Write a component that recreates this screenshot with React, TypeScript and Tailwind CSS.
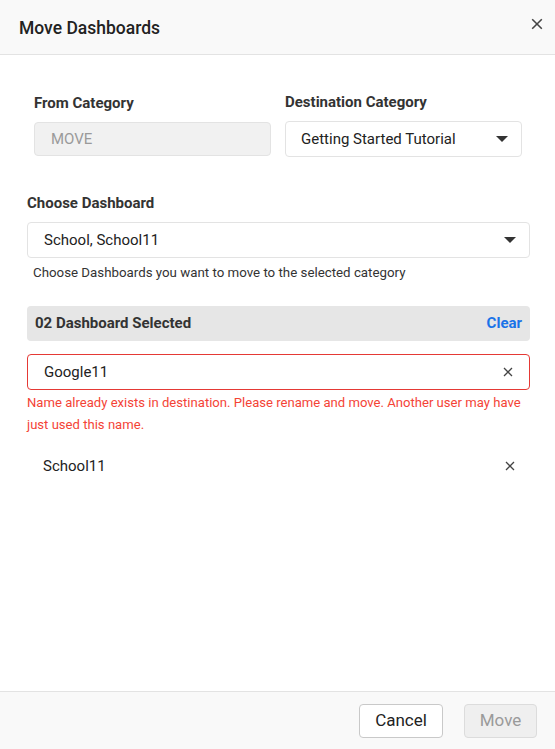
import React from "react";

function Caret() {
  return (
    <svg width="12" height="6" viewBox="0 0 12 6" className="shrink-0">
      <path d="M0 0h12L6 6z" fill="#333" />
    </svg>
  );
}

function Cross({ size = 10 }: { size?: number }) {
  return (
    <svg width={size} height={size} viewBox="0 0 10 10" className="shrink-0">
      <path d="M1 1l8 8M9 1l-8 8" stroke="#444" strokeWidth="1.3" />
    </svg>
  );
}

export default function App() {
  return (
    <div
      className="w-[555px] h-[749px] bg-white flex flex-col text-[#333]"
      style={{ fontFamily: "Roboto, 'Liberation Sans', sans-serif" }}
    >
      <header className="h-[55px] shrink-0 bg-[#f9f9f9] border-b border-[#e3e3e3] flex items-center justify-between pl-[19px] pr-[6px]">
        <h1 className="text-[17.5px] font-medium text-[#222] pt-[2px]">Move Dashboards</h1>
        <button className="w-6 h-6 flex items-center justify-center -mt-[7px]">
          <Cross size={12} />
        </button>
      </header>

      <main className="flex-1 pl-[27px] pr-[25px]">
        <section className="grid grid-cols-2 gap-[14px] pt-[38px] pl-[7px] pr-[8px]">
          <div>
            <p className="text-[15px] font-bold leading-[18px] mb-[10px] pt-[1px]">From Category</p>
            <div className="h-[34px] rounded-[4px] bg-[#f1f1f1] border border-[#e3e3e3] flex items-center pl-[16px] text-[15px] text-[#9a9a9a]">
              MOVE
            </div>
          </div>
          <div>
            <p className="text-[15px] font-bold leading-[18px] mb-[10px]">Destination Category</p>
            <div className="h-[36px] rounded-[4px] bg-white border border-[#e3e3e3] flex items-center justify-between pl-[15px] pr-[13px] text-[15px] text-[#222]">
              <span>Getting Started Tutorial</span>
              <Caret />
            </div>
          </div>
        </section>

        <section className="mt-[37px]">
          <p className="text-[15px] font-bold leading-[18px] mb-[10px]">Choose Dashboard</p>
          <div className="h-[36px] rounded-[4px] bg-white border border-[#e3e3e3] flex items-center justify-between pl-[16px] pr-[13px] text-[15px] text-[#222]">
            <span>School, School11</span>
            <Caret />
          </div>
          <p className="text-[13.3px] leading-[14px] mt-[8px] pl-[6px] text-[#333]">
            Choose Dashboards you want to move to the selected category
          </p>
        </section>

        <section className="mt-[26px]">
          <div className="h-[35px] rounded-[4px] bg-[#e6e6e6] flex items-center justify-between pl-[8px] pr-[8px]">
            <span className="text-[15px] font-bold text-[#333]">02 Dashboard Selected</span>
            <button className="text-[15px] font-bold text-[#1a73e8]">Clear</button>
          </div>

          <div className="mt-[13px] h-[36px] rounded-[4px] border border-[#e53935] flex items-center justify-between pl-[16px] pr-[16px] text-[15px] text-[#222]">
            <span>Google11</span>
            <Cross />
          </div>
          <p className="text-[13.1px] leading-[22px] mt-[2px] -mr-[2px] text-[#f44336]">
            Name already exists in destination. Please rename and move. Another user may have just used this name.
          </p>

          <div className="mt-[20px] h-[20px] flex items-center justify-between pl-[16px] pr-[15px] text-[15px] text-[#222]">
            <span>School11</span>
            <Cross />
          </div>
        </section>
      </main>

      <footer className="h-[58px] shrink-0 bg-[#f9f9f9] border-t border-[#e3e3e3] flex items-center justify-end gap-[21px] pr-[18px]">
        <button className="h-[34px] w-[84px] rounded-[4px] bg-white border border-[#c9c9c9] text-[17px] text-[#222]">
          Cancel
        </button>
        <button className="h-[34px] w-[73px] rounded-[4px] bg-[#efefef] border border-[#dcdcdc] text-[17px] text-[#9a9a9a]">
          Move
        </button>
      </footer>
    </div>
  );
}
